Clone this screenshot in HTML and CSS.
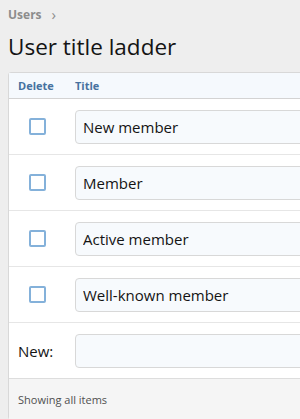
FILE: index.html
```html
<!DOCTYPE html>
<html lang="en">
  <head>
    <meta charset="UTF-8" />
    <title>User title ladder</title>
    <link rel="stylesheet" href="styles.css">
  </head>
  <body>
    <div class="page">
      <div class="breadcrumb">
        <a href="#">Users</a>
        <span class="crumb-sep">&rsaquo;</span>
      </div>
      <h1 class="page-title">User title ladder</h1>

      <div class="block">
        <div class="data-row data-head">
          <div class="cell cell-delete">Delete</div>
          <div class="cell cell-title">Title</div>
        </div>

        <div class="data-row">
          <div class="cell cell-delete"><input type="checkbox" class="check" /></div>
          <div class="cell cell-title"><input class="input" type="text" value="New member" /></div>
        </div>
        <div class="data-row">
          <div class="cell cell-delete"><input type="checkbox" class="check" /></div>
          <div class="cell cell-title"><input class="input" type="text" value="Member" /></div>
        </div>
        <div class="data-row">
          <div class="cell cell-delete"><input type="checkbox" class="check" /></div>
          <div class="cell cell-title"><input class="input" type="text" value="Active member" /></div>
        </div>
        <div class="data-row">
          <div class="cell cell-delete"><input type="checkbox" class="check" /></div>
          <div class="cell cell-title"><input class="input" type="text" value="Well-known member" /></div>
        </div>
        <div class="data-row">
          <div class="cell cell-delete cell-label">New:</div>
          <div class="cell cell-title"><input class="input" type="text" value="" /></div>
        </div>

        <div class="block-footer">Showing all items</div>
      </div>
    </div>
  </body>
</html>
```

FILE: styles.css
```css
html {
  overflow: hidden;
}

body {
  margin: 0px;
  background: #eeeeee;
  color: #141414;
  font-family: "Segoe UI", "Open Sans", sans-serif;
}

.page {
  padding: 5px 0 0 8px;
}

.breadcrumb {
  display: flex;
  align-items: center;
  gap: 10px;
  height: 18px;
  font-size: 12px;
  font-weight: bold;

  a {
    color: #8c8c8c;
    text-decoration: none;
  }
}

.crumb-sep {
  color: #8c8c8c;
  font-weight: normal;
  font-size: 15px;
}

.page-title {
  margin: 8px 0 0 0;
  font-size: 22.5px;
  font-weight: normal;
  line-height: 32px;
  height: 41px;
}

.block {
  width: 420px;
  background: #ffffff;
  border: 1px solid #d8d8d8;
  border-radius: 3px 0 0 3px;
}

.data-row {
  display: flex;
  align-items: center;
  height: 55px;
  border-top: 1px solid #e6e6e6;
}

.data-head {
  height: 25px;
  border-top: none;
  border-bottom: 1px solid #d3d3d3;
  background: #f5f9fd;
  font-size: 11px;
  font-weight: bold;
  color: #47729f;

  + .data-row {
    border-top: none;
  }
}

.cell-delete {
  width: 66px;
  padding-left: 9px;
  box-sizing: border-box;
}

.cell-title {
  flex: 1;
}

.cell-label {
  font-size: 15px;
}

.check {
  appearance: none;
  display: block;
  margin: 0 0 0 11px;
  width: 17px;
  height: 17px;
  border: 2px solid #84b1da;
  border-radius: 2px;
  background: #ffffff;
  box-sizing: border-box;
}

.input {
  display: block;
  box-sizing: border-box;
  width: 100%;
  height: 34px;
  margin: 0;
  padding: 0 7px;
  border: 1px solid #d8d8d8;
  border-radius: 4px;
  background: #f7fafd;
  color: #141414;
  font-family: inherit;
  font-size: 15px;
}

.block-footer {
  height: 40px;
  padding-left: 9px;
  display: flex;
  align-items: center;
  border-top: 1px solid #dddddd;
  background: #f5f5f5;
  color: #505050;
  font-size: 11px;
}
```
